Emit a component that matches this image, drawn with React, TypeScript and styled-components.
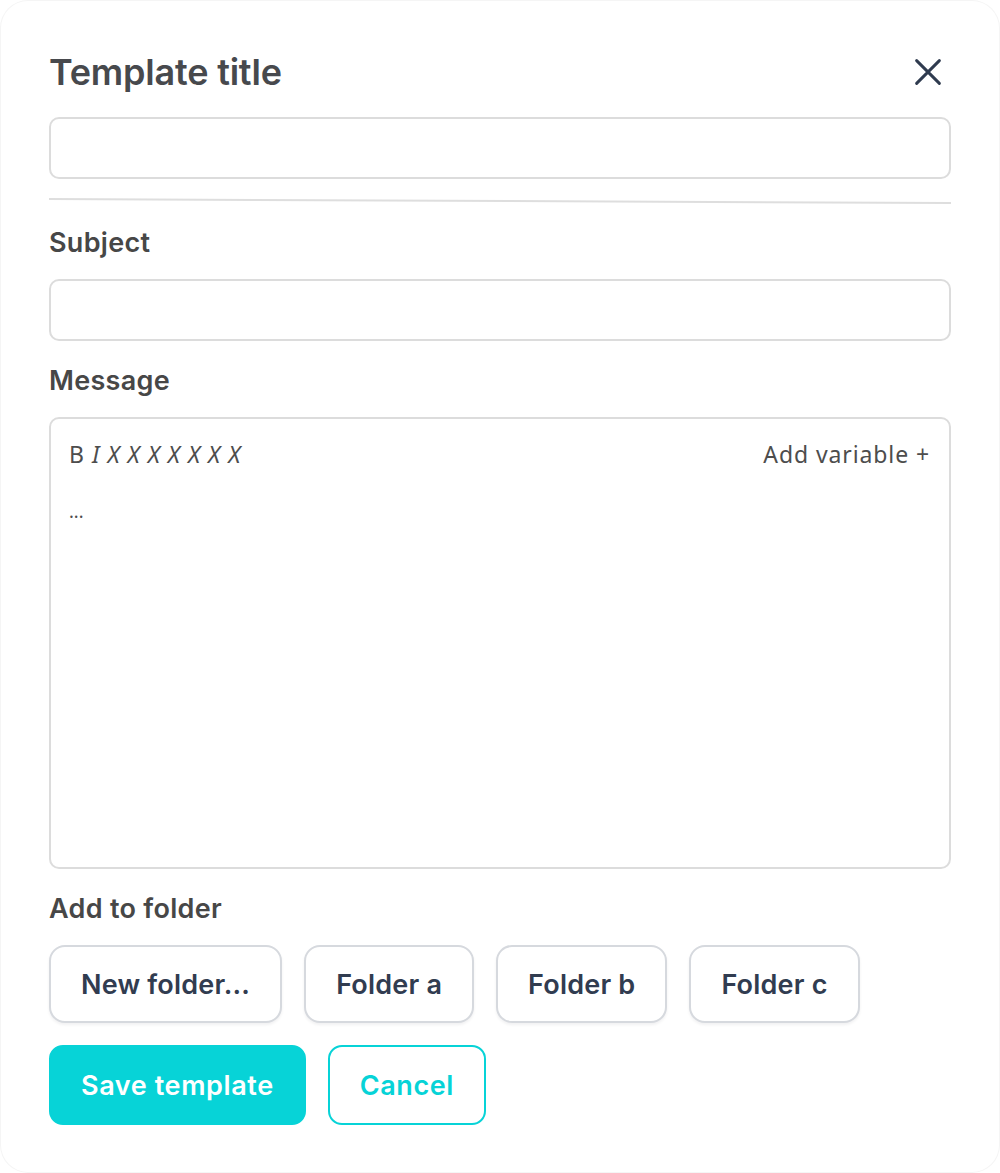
import styled, { createGlobalStyle } from 'styled-components';

const GlobalStyle = createGlobalStyle`
  body {
    margin: 0;
    background: #ffffff;
    font-family: Inter, "Liberation Sans", sans-serif;
  }
`;

const folders = ['New folder...', 'Folder a', 'Folder b', 'Folder c'];
const formatMarks = ['X', 'X', 'X', 'X', 'X', 'X', 'X'];

function App() {
  return (
    <>
      <GlobalStyle />
      <Card>
        <Header>
          <Title>Template title</Title>
          <CloseButton aria-label="Close">
            <svg width="32" height="32" viewBox="0 0 32 32" fill="none">
              <path d="M3 3L29 29M29 3L3 29" stroke="#2f3b4f" strokeWidth="3.4" strokeLinecap="round" />
            </svg>
          </CloseButton>
        </Header>
        <Input style={{ marginTop: 23 }} />
        <Divider />
        <Label style={{ marginTop: 25 }}>Subject</Label>
        <Input />
        <Label>Message</Label>
        <Editor>
          <Toolbar>
            <Marks>
              <Mark>B</Mark>
              <Mark italic>I</Mark>
              {formatMarks.map((m, i) => (
                <Mark italic key={i}>{m}</Mark>
              ))}
            </Marks>
            <AddVariable>Add variable +</AddVariable>
          </Toolbar>
          <Placeholder>...</Placeholder>
        </Editor>
        <Label>Add to folder</Label>
        <FolderRow>
          {folders.map((f) => (
            <FolderButton key={f}>{f}</FolderButton>
          ))}
        </FolderRow>
        <Actions>
          <PrimaryButton>Save template</PrimaryButton>
          <OutlineButton>Cancel</OutlineButton>
        </Actions>
      </Card>
    </>
  );
}

export default App;

const Card = styled.div`
  box-sizing: border-box;
  width: 1000px;
  height: 1173px;
  background: #ffffff;
  box-shadow: inset 0 0 0 1px #f5f5f5;
  border-radius: 28px;
  padding: 50px 49px 0 49px;
  display: flex;
  flex-direction: column;
`;

const Header = styled.div`
  display: flex;
  align-items: center;
  justify-content: space-between;
  height: 44px;
`;

const Title = styled.h1`
  margin: 0;
  font-size: 36px;
  line-height: 44px;
  font-weight: 600;
  color: #47494d;
  letter-spacing: -0.2px;
`;

const CloseButton = styled.button`
  border: none;
  background: none;
  padding: 0;
  margin-right: 7px;
  width: 32px;
  height: 32px;
  display: flex;
  align-items: center;
  justify-content: center;
  cursor: pointer;

  svg {
    width: 28px;
    height: 28px;
  }
`;

const Input = styled.input`
  box-sizing: border-box;
  width: 100%;
  height: 62px;
  border: 2px solid #dcdcdc;
  border-radius: 10px;
  outline: none;
  margin-top: 20px;
  padding: 0 18px;
  font-size: 20px;
`;

const Divider = styled.div`
  height: 2px;
  background: #dedede;
  margin-top: 21px;
  transform: rotate(0.25deg);
`;

const Label = styled.label`
  display: block;
  margin-top: 24px;
  font-size: 27px;
  line-height: 32px;
  font-weight: 600;
  color: #474747;
  letter-spacing: 0.3px;
`;

const Editor = styled.div`
  box-sizing: border-box;
  margin-top: 20px;
  height: 452px;
  border: 2px solid #dcdcdc;
  border-radius: 10px;
  padding: 21px 19px 0 18px;
  font-family: "Noto Sans", "Open Sans", sans-serif;
  color: #4d4d4d;
`;

const Toolbar = styled.div`
  display: flex;
  align-items: center;
  justify-content: space-between;
  height: 28px;
`;

const Marks = styled.div`
  display: flex;
  gap: 8px;
`;

const Mark = styled.span<{ italic?: boolean }>`
  font-size: 23px;
  font-style: ${(p) => (p.italic ? 'italic' : 'normal')};
  font-weight: 400;
`;

const AddVariable = styled.span`
  font-size: 23px;
  font-weight: 400;
  letter-spacing: 0.9px;
`;

const Placeholder = styled.div`
  margin-top: 33px;
  font-size: 18px;
  line-height: 20px;
`;

const FolderRow = styled.div`
  display: flex;
  gap: 22px;
  margin-top: 20px;
`;

const FolderButton = styled.button`
  box-sizing: border-box;
  height: 78px;
  padding: 0 30px;
  background: #ffffff;
  border: 2px solid #d6d9de;
  border-radius: 16px;
  box-shadow: 0 2px 3px rgba(16, 24, 40, 0.06);
  font-family: Inter, "Liberation Sans", sans-serif;
  font-size: 27px;
  font-weight: 600;
  letter-spacing: 0.2px;
  color: #313c50;
  cursor: pointer;
`;

const Actions = styled.div`
  display: flex;
  gap: 22px;
  margin-top: 22px;
`;

const PrimaryButton = styled.button`
  box-sizing: border-box;
  height: 80px;
  padding: 0 30px;
  background: #07d3d7;
  border: 2px solid #07d3d7;
  border-radius: 14px;
  font-family: Inter, "Liberation Sans", sans-serif;
  font-size: 27px;
  font-weight: 600;
  letter-spacing: 0.6px;
  color: #ffffff;
  cursor: pointer;
`;

const OutlineButton = styled(PrimaryButton)`
  background: #ffffff;
  color: #07d3d7;
`;
